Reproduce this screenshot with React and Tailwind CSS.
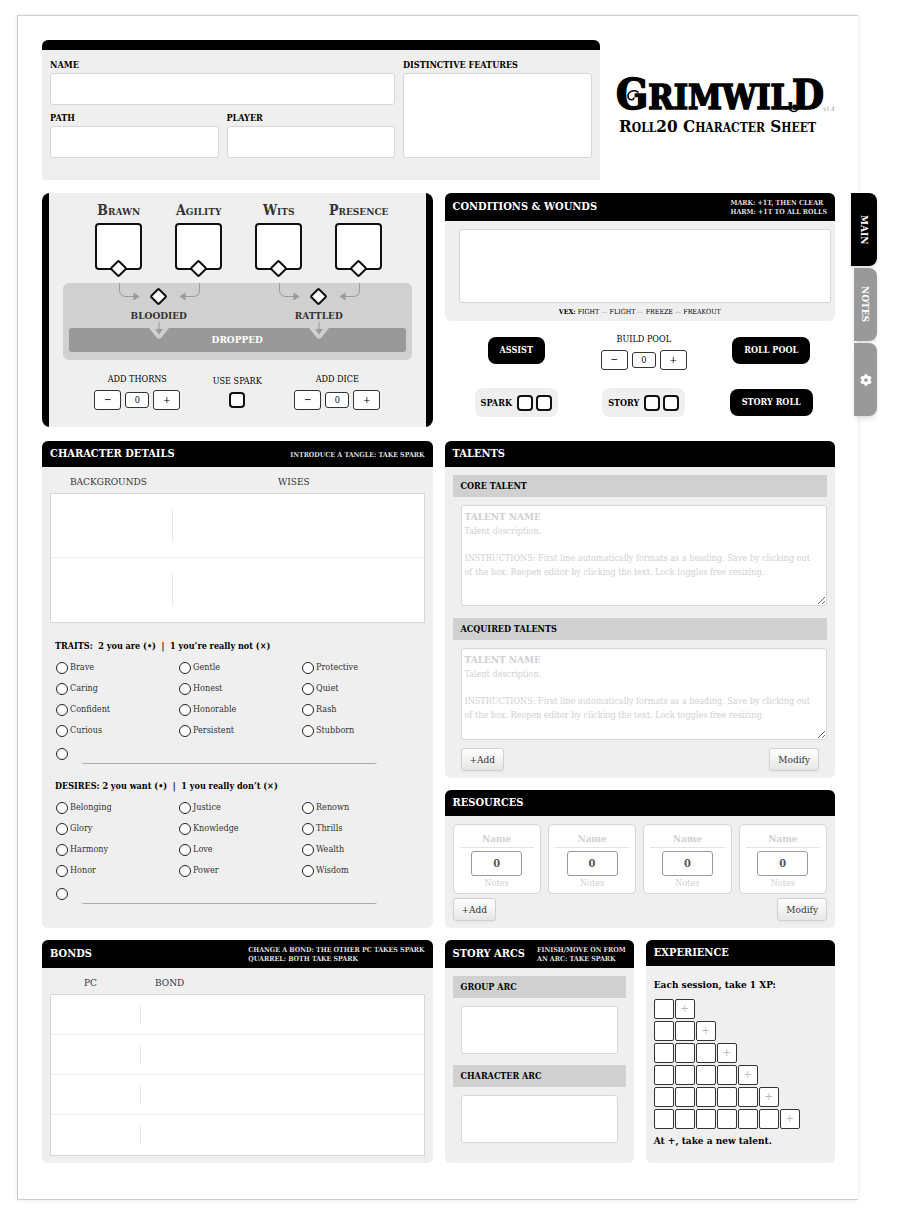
import { useId } from "react";
import { FaCog } from "react-icons/fa";

const INPUT = "block w-full rounded-[3px] border border-[#d6d6d6] bg-white px-1 text-[10px]";

function Field({ label, area, className = "", boxClass = "h-8" }) {
  const id = useId();
  return (
    <div className={`flex flex-col ${className}`}>
      <label htmlFor={id} className="text-[9px] leading-4 font-bold">{label}</label>
      {area ? (
        <textarea id={id} className={`${INPUT} resize-none ${boxClass}`} />
      ) : (
        <input id={id} type="text" className={`${INPUT} ${boxClass}`} />
      )}
    </div>
  );
}

function PanelHeader({ title, hint, tall }) {
  return (
    <header className={`flex items-center justify-between rounded-t-md bg-black px-2 text-white ${tall ? "h-7" : "h-[26px]"}`}>
      <h2 className="text-[11px] leading-4 font-bold">{title}</h2>
      {hint && <p className="whitespace-pre text-[7px] leading-[9px] font-bold text-[#ddd]">{hint}</p>}
    </header>
  );
}

function Panel({ title, hint, tall, className = "", children }) {
  return (
    <section className={`flex flex-col rounded-md bg-[#efefef] ${className}`}>
      <PanelHeader title={title} hint={hint} tall={tall} />
      {children}
    </section>
  );
}

function SubHeading({ children }) {
  return <h3 className="bg-[#d0d0d0] px-2 text-[9px] leading-[22px] font-bold">{children}</h3>;
}

function Stepper({ label }) {
  const id = useId();
  const btn = "flex h-5 w-[27px] items-center justify-center rounded-[3px] border border-[#333] bg-white text-[10px] leading-none";
  return (
    <div className="flex flex-col items-center">
      <label htmlFor={id} className="text-[9px] leading-4 font-medium">{label}</label>
      <div className="mt-[3px] flex items-center gap-1">
        <button type="button" aria-label={`Decrease ${label}`} className={btn}>−</button>
        <input id={id} type="text" defaultValue="0" className="h-4 w-6 rounded-[3px] border border-[#333] bg-white text-center text-[9px] leading-none" />
        <button type="button" aria-label={`Increase ${label}`} className={btn}>+</button>
      </div>
    </div>
  );
}

function Box({ label, className = "size-4 rounded-[4px] border-2 border-[#111]" }) {
  return <input type="checkbox" aria-label={label} className={`block appearance-none bg-white checked:bg-black ${className}`} />;
}

const DIAMOND = "size-[13px] rotate-45 rounded-[2px] border-2 border-[#111]";

function Attribute({ name }) {
  const id = useId();
  return (
    <div className="flex w-20 flex-col items-center">
      <label htmlFor={id} className="text-[14px] leading-5 font-bold text-[#333] [font-variant:small-caps]">{name}</label>
      <input id={id} type="text" className="mt-[3px] size-[47px] rounded-[4px] border-2 border-[#111] bg-white text-center text-xl" />
      <div className="-mt-2">
        <Box label={`${name} marked`} className={DIAMOND} />
      </div>
    </div>
  );
}

function Harm({ name }) {
  return (
    <div className="flex w-40 flex-col items-center">
      <div className="grid h-[27px] w-full items-center justify-items-center">
        <svg viewBox="0 0 160 27" className="col-start-1 row-start-1 h-[27px] w-40" fill="none" stroke="#999">
          <path d="M40.500 0V7Q40.500 13.500 47 13.500H55" />
          <path d="M120.500 0V7Q120.500 13.500 114 13.500H106" />
          <path d="M54.500 9.500L60.500 13.500L54.500 17.500Z" fill="#999" stroke="none" />
          <path d="M106.500 9.500L100.500 13.500L106.500 17.500Z" fill="#999" stroke="none" />
        </svg>
        <div className="col-start-1 row-start-1">
          <Box label={name} className={DIAMOND} />
        </div>
      </div>
      <p className="text-[10px] leading-3 font-bold text-[#333]">{name}</p>
      <svg viewBox="0 0 24 18" className="z-10 -mb-3 h-[18px] w-6">
        <path d="M2 6H22L14 16Q12 17.500 10 16Z" fill="#d0d0d0" />
        <path d="M12 0V8" stroke="#999" fill="none" />
        <path d="M8 7H16L12 12.500Z" fill="#999" />
      </svg>
    </div>
  );
}

const ACTION = "rounded-lg bg-black px-3 text-[9px] leading-[27px] font-bold text-white";

function Tokens({ label }) {
  return (
    <fieldset className="flex h-[29px] items-center gap-[3px] rounded-lg bg-[#efefef] px-1.5">
      <span className="mr-0.5 text-[9px] leading-4 font-bold">{label}</span>
      <Box label={`${label} 1`} />
      <Box label={`${label} 2`} />
    </fieldset>
  );
}

function Choices({ title, names, other }) {
  const round = "size-3 shrink-0 rounded-full border border-[#222]";
  return (
    <fieldset className="pl-[5px]">
      <legend className="text-[9px] leading-4 font-bold whitespace-pre">{title}</legend>
      <div className="grid w-[370px] grid-flow-col grid-cols-3 grid-rows-4 pt-[3px] pl-px">
        {names.map((n) => (
          <label key={n} className="flex h-[21px] items-center gap-0.5 text-[9px] text-[#333]">
            <Box className={round} />
            {n}
          </label>
        ))}
      </div>
      <div className="flex h-[25px] items-center gap-[13px] pl-px">
        <Box label={`${other} marked`} className={round} />
        <input type="text" aria-label={other} className="h-5 w-[296px] rounded-[3px] border-b border-[#aaa] text-[10px]" />
      </div>
    </fieldset>
  );
}

function Rows({ heads, count, rowClass, lineClass, leftClass }) {
  return (
    <table className="block px-2 text-left">
      <thead className="block">
        <tr className="flex h-[26px] items-center pt-0.5 text-[10px] text-[#333]">
          {heads.map((h) => (
            <th key={h.text} className={`font-normal ${h.className}`}>{h.text}</th>
          ))}
        </tr>
      </thead>
      <tbody className="block divide-y divide-[#eee] border border-[#d6d6d6] bg-white">
        {Array.from({ length: count }, (_, i) => (
          <tr key={i} className={`flex items-center ${rowClass}`}>
            <td className={`border-r border-[#e8e8e8] ${lineClass} ${leftClass}`}>
              <input type="text" aria-label={`${heads[0].text} ${i + 1}`} className="h-full w-full px-1 text-[10px]" />
            </td>
            <td className={`flex-1 ${lineClass}`}>
              <input type="text" aria-label={`${heads[1].text} ${i + 1}`} className="h-full w-full px-1 text-[10px]" />
            </td>
          </tr>
        ))}
      </tbody>
    </table>
  );
}

function TalentEditor({ label, className }) {
  return (
    <div className="relative ml-2 text-[#d0d0d0]">
      <textarea aria-label={label} className={`${INPUT} resize ${className}`} />
      <div className="pointer-events-none absolute top-[5px] right-3 left-1 text-[9px] leading-[14px]">
        <p className="text-[10px] font-bold">TALENT NAME</p>
        <p>Talent description.</p>
        <p className="mt-[13px]">
          INSTRUCTIONS: First line automatically formats as a heading. Save by clicking out of the box. Reopen editor by clicking the text. Lock toggles free resizing.
        </p>
      </div>
    </div>
  );
}

function ListButtons({ className = "" }) {
  const btn = "h-[23px] rounded-[3px] border border-[#d0d0d0] bg-linear-to-b from-white to-[#e6e6e6] px-2 text-[10px] text-[#333] shadow-xs";
  return (
    <div className={`flex justify-between ${className}`}>
      <button type="button" className={btn}>+Add</button>
      <button type="button" className={btn}>Modify</button>
    </div>
  );
}

function Resource({ n }) {
  return (
    <div className="flex h-[70px] min-w-0 flex-1 flex-col items-center rounded-[5px] border border-[#d6d6d6] bg-white px-1.5 pt-1">
      <input type="text" placeholder="Name" aria-label={`Resource ${n} name`} className="h-[19px] w-full border-b border-[#e4e4e4] text-center text-[10px] font-bold placeholder:text-[#d0d0d0]" />
      <input type="text" defaultValue="0" aria-label={`Resource ${n} amount`} className="mt-[3px] h-[25px] w-[51px] rounded-[3px] border border-[#999] text-center text-[11px] font-bold text-[#555]" />
      <input type="text" placeholder="Notes" aria-label={`Resource ${n} notes`} className="h-[14px] w-full text-center text-[9px] placeholder:text-[#d0d0d0]" />
    </div>
  );
}

function Logo() {
  return (
    <div className="flex flex-1 flex-col items-center pt-[30px]">
      <div className="flex items-end pl-4">
        <svg viewBox="0 0 207 46" className="h-[46px] w-[207px] overflow-visible" role="img" aria-label="Grimwild">
          <text x="0" y="39" fontFamily="'DejaVu Serif Condensed','DejaVu Serif',serif" fontWeight="700" stroke="#000" strokeWidth="1.5">
            <tspan fontSize="42">G</tspan>
            <tspan fontSize="34">RIMWIL</tspan>
            <tspan fontSize="41">D</tspan>
          </text>
          <g fill="none" stroke="#000" strokeLinecap="round">
            <path d="M22 22C17 19 12 22 12 26C12 30 17 31 18 28" strokeWidth="1.500" />
            <path d="M174 40C178 43 183 41 181 37C180 34 176 35 177 38" strokeWidth="1.500" />
          </g>
        </svg>
        <span className="pb-1 text-[6px] leading-none text-[#999]">v1.4</span>
      </div>
      <h1 className="text-[17px] leading-5 font-bold whitespace-nowrap [font-variant:small-caps]">Roll20 Character Sheet</h1>
    </div>
  );
}

const TRAITS = ["Brave", "Caring", "Confident", "Curious", "Gentle", "Honest", "Honorable", "Persistent", "Protective", "Quiet", "Rash", "Stubborn"];
const DESIRES = ["Belonging", "Glory", "Harmony", "Honor", "Justice", "Knowledge", "Love", "Power", "Renown", "Thrills", "Wealth", "Wisdom"];

export default function App() {
  const tab = "flex h-[73px] items-center justify-center rounded-r-lg text-[10px] font-bold text-white shadow-md [writing-mode:vertical-rl]";
  return (
    <div className="bg-white pt-[15px] pr-10 pb-[22px] pl-[17px] font-['DejaVu_Serif_Condensed','DejaVu_Serif',serif] text-black">
      <main className="relative border-y border-l border-[#ccc] pt-6 pr-[23px] pb-9 pl-6 shadow-[0_0_4px_rgba(0,0,0,0.1)]">
        <nav className="absolute top-[177px] -right-[19px] flex flex-col items-end gap-0.5">
          <button type="button" className={`${tab} w-[26px] bg-black`}>MAIN</button>
          <button type="button" className={`${tab} w-[23px] bg-[#999]`}>NOTES</button>
          <button type="button" aria-label="Settings" className={`${tab} w-[23px] bg-[#999]`}><FaCog className="size-3" /></button>
        </nav>

        <div className="flex">
          <section className="h-[140px] w-[558px] rounded-t-md border-t-[10px] border-black bg-[#efefef] px-2 pt-[7px]">
            <div className="flex gap-2">
              <div className="flex flex-1 flex-col gap-[5px]">
                <Field label="NAME" />
                <div className="flex gap-2">
                  <Field label="PATH" className="flex-1" />
                  <Field label="PLAYER" className="flex-1" />
                </div>
              </div>
              <Field label="DISTINCTIVE FEATURES" area className="w-[189px]" boxClass="flex-1" />
            </div>
          </section>
          <Logo />
        </div>

        <div className="mt-[13px] grid grid-cols-2 gap-x-3 gap-y-[14px]">
          <section className="flex rounded-lg bg-black px-[7px]">
            <div className="flex flex-1 flex-col items-center bg-[#efefef] pt-[7px] pb-[17px]">
              <div className="flex pl-[3px]">
                {["Brawn", "Agility", "Wits", "Presence"].map((n) => <Attribute key={n} name={n} />)}
              </div>
              <div className="mt-2 w-[349px] rounded-md bg-[#d0d0d0] px-1.5 pb-2">
                <div className="flex justify-center pl-[3px]">
                  <Harm name="BLOODIED" />
                  <Harm name="RATTLED" />
                </div>
                <p className="rounded-[3px] bg-[#999] text-center text-[10px] leading-6 font-bold text-white">DROPPED</p>
              </div>
              <div className="mt-[11px] grid grid-cols-[100px_100px_100px]">
                <Stepper label="ADD THORNS" />
                <label className="flex flex-col items-center gap-[3px] pt-0.5 text-[9px] leading-4 font-medium">
                  USE SPARK
                  <Box />
                </label>
                <Stepper label="ADD DICE" />
              </div>
            </div>
          </section>

          <div className="flex flex-col">
            <Panel title="CONDITIONS & WOUNDS" hint={"MARK: +1T, THEN CLEAR\nHARM: +1T TO ALL ROLLS"} tall className="h-32">
              <div className="pt-2 pr-1 pl-3.5">
                <textarea aria-label="Conditions and wounds" className={`${INPUT} h-[74px] resize-none`} />
              </div>
              <p className="pt-[3px] text-center text-[7px] leading-3"><b>VEX:</b> FIGHT <i className="text-[#999] not-italic">—</i> FLIGHT <i className="text-[#999] not-italic">—</i> FREEZE <i className="text-[#999] not-italic">—</i> FREAKOUT</p>
            </Panel>
            <div className="grid grid-cols-3 grid-rows-[39px_29px] items-center justify-items-center gap-y-[18px] pt-2.5 pb-2.5 pl-2">
              <button type="button" className={ACTION}>ASSIST</button>
              <Stepper label="BUILD POOL" />
              <button type="button" className={ACTION}>ROLL POOL</button>
              <Tokens label="SPARK" />
              <Tokens label="STORY" />
              <button type="button" className={ACTION}>STORY ROLL</button>
            </div>
          </div>

          <div className="flex flex-col gap-3">
            <Panel title="CHARACTER DETAILS" hint="INTRODUCE A TANGLE: TAKE SPARK" className="h-[487px]">
              <Rows
                heads={[{ text: "BACKGROUNDS", className: "w-[228px] pl-5" }, { text: "WISES", className: "" }]}
                count={2}
                rowClass="h-16"
                lineClass="h-8"
                leftClass="w-[122px]"
              />
              <div className="flex flex-col gap-3 px-2 pt-[15px]">
                <Choices title="TRAITS:  2 you are (•)  |  1 you’re really not (×)" names={TRAITS} other="Other trait" />
                <Choices title="DESIRES: 2 you want (•)  |  1 you really don’t (×)" names={DESIRES} other="Other desire" />
              </div>
            </Panel>
            <Panel title="BONDS" hint={"CHANGE A BOND: THE OTHER PC TAKES SPARK\nQUARREL: BOTH TAKE SPARK"} tall className="h-[223px]">
              <Rows
                heads={[{ text: "PC", className: "w-[105px] pl-[34px]" }, { text: "BOND", className: "" }]}
                count={4}
                rowClass="h-10"
                lineClass="h-5"
                leftClass="w-[90px]"
              />
            </Panel>
          </div>

          <div className="flex flex-col gap-3">
            <Panel title="TALENTS" className="h-[337px]">
              <div className="px-2 pt-2">
                <SubHeading>CORE TALENT</SubHeading>
                <div className="pt-2 pb-3"><TalentEditor label="Core talent" className="h-[101px]" /></div>
                <SubHeading>ACQUIRED TALENTS</SubHeading>
                <div className="pt-2 pb-2"><TalentEditor label="Acquired talents" className="h-[92px]" /></div>
                <ListButtons className="px-2" />
              </div>
            </Panel>
            <Panel title="RESOURCES" className="h-[138px]">
              <div className="px-2 pt-2">
                <div className="mb-1 flex gap-[7px]">
                  {[1, 2, 3, 4].map((n) => <Resource key={n} n={n} />)}
                </div>
                <ListButtons />
              </div>
            </Panel>
            <div className="grid h-[223px] grid-cols-2 gap-3">
              <Panel title="STORY ARCS" hint={"FINISH/MOVE ON FROM\nAN ARC: TAKE SPARK"} tall>
                <div className="p-2">
                  <SubHeading>GROUP ARC</SubHeading>
                  <div className="px-2 pt-2 pb-[11px]"><textarea aria-label="Group arc" className={`${INPUT} h-12 resize-none`} /></div>
                  <SubHeading>CHARACTER ARC</SubHeading>
                  <div className="px-2 pt-2"><textarea aria-label="Character arc" className={`${INPUT} h-12 resize-none`} /></div>
                </div>
              </Panel>
              <Panel title="EXPERIENCE">
                <div className="px-2 pt-[11px] text-[10px] leading-4 font-bold">
                  <p>Each session, take 1 XP:</p>
                  <div className="flex flex-col gap-0.5 pt-1.5 pb-1">
                    {[1, 2, 3, 4, 5, 6].map((n) => (
                      <div key={n} className="flex gap-px">
                        {Array.from({ length: n }, (_, i) => (
                          <Box key={i} label={`Row ${n} XP ${i + 1}`} className="size-5 rounded-[2px] border border-[#333]" />
                        ))}
                        <label className="grid place-items-center">
                          <Box className="col-start-1 row-start-1 size-5 rounded-[2px] border border-[#333]" />
                          <span className="col-start-1 row-start-1 text-[11px] font-normal text-[#bbb]">+</span>
                        </label>
                      </div>
                    ))}
                  </div>
                  <p>At +, take a new talent.</p>
                </div>
              </Panel>
            </div>
          </div>
        </div>
      </main>
    </div>
  );
}
